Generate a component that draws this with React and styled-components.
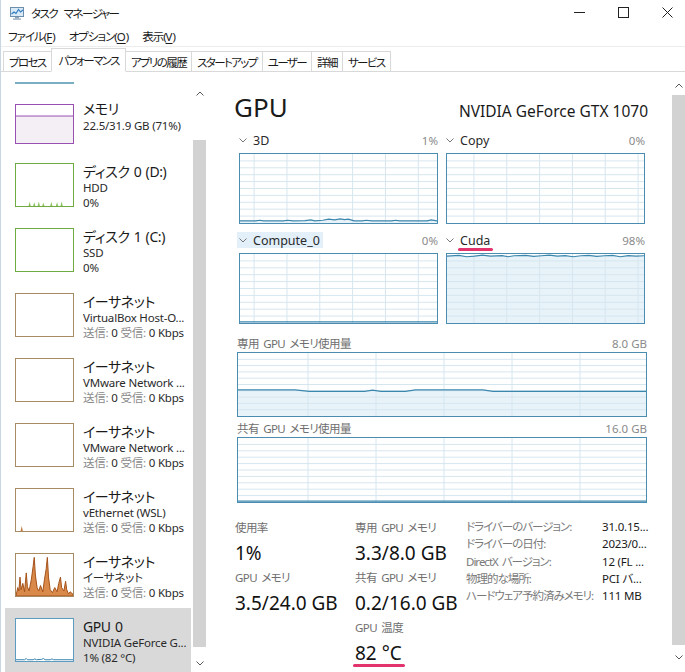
import React from "react";
import styled, { createGlobalStyle } from "styled-components";

const GlobalStyle = createGlobalStyle`
  html, body { margin: 0; padding: 0; background: #fff; }
  body {
    font-family: "Noto Sans", "Noto Sans CJK JP", sans-serif;
    font-feature-settings: "palt";
    color: #1a1a1a;
  }
`;

const Window = styled.div`
  width: 685px;
  height: 672px;
  overflow: hidden;
  display: flex;
  flex-direction: column;
  background: #fff;
  border-left: 1px solid #c9d7e3;
  box-sizing: border-box;
`;

const TitleBar = styled.div`
  height: 25px;
  flex: none;
  display: flex;
  align-items: center;
  padding-left: 8px;
  overflow: hidden;
`;

const AppTitle = styled.span`
  margin-left: 5px;
  font-size: 11.5px;
  letter-spacing: -1.5px;
  word-spacing: 5px;
`;

const WinControls = styled.div`
  margin-left: auto;
  margin-right: -4px;
  display: flex;
`;

const WinButton = styled.div`
  width: 44px;
  height: 25px;
  display: flex;
  align-items: center;
  justify-content: center;
`;

const MenuBar = styled.div`
  height: 21px;
  flex: none;
  display: flex;
  align-items: center;
  gap: 14px;
  padding-left: 7px;
  font-size: 11.5px;
  letter-spacing: -1px;

  u {
    text-underline-offset: 2px;
    letter-spacing: 0;
  }
`;

const TabBar = styled.div`
  height: 26px;
  flex: none;
  box-sizing: border-box;
  border-top: 1px solid #ededed;
  border-bottom: 1px solid #d9d9d9;
  display: flex;
  align-items: flex-end;
  padding-left: 3px;
`;

const Tab = styled.div`
  height: ${(p) => (p.$active ? 24 : 21)}px;
  margin-bottom: -1px;
  margin-left: -1px;
  box-sizing: border-box;
  padding: 0 ${(p) => (p.$active ? 6 : 5)}px 0 ${(p) => (p.$active ? 7 : 5)}px;
  display: flex;
  align-items: center;
  border: 1px solid #d9d9d9;
  border-bottom-color: ${(p) => (p.$active ? "#fff" : "#d9d9d9")};
  background: #fff;
  font-size: 11.5px;
  letter-spacing: -1.6px;
  position: relative;
  z-index: ${(p) => (p.$active ? 1 : 0)};
`;

const Body = styled.div`
  flex: 1;
  min-height: 0;
  display: flex;
`;

const Sidebar = styled.div`
  width: 205px;
  flex: none;
  display: flex;
`;

const SideList = styled.div`
  width: 192px;
  flex: none;
  display: flex;
  flex-direction: column;
  overflow: hidden;
`;

const CpuTail = styled.div`
  height: 12px;
  width: 59px;
  flex: none;
  margin: 0 0 4px 14px;
  box-sizing: border-box;
  border-bottom: 2px solid #7aaec2;
`;

const SideItem = styled.div`
  height: 65px;
  flex: none;
  display: flex;
  align-items: flex-start;
  margin: 0 2px 0 4px;
  padding-left: 10px;
  box-sizing: border-box;
  background: ${(p) => (p.$selected ? "#d9d9d9" : "transparent")};
`;

const Thumb = styled.div`
  width: 59px;
  height: ${(p) => p.$h}px;
  margin-top: ${(p) => p.$top}px;
  flex: none;
  box-sizing: border-box;
  border: 1px solid ${(p) => p.$color};
  background: #fff;
  overflow: hidden;

  svg {
    display: block;
    width: 100%;
    height: 100%;
  }
`;

const ItemText = styled.div`
  margin-left: 9px;
  padding-top: ${(p) => p.$top}px;
  min-width: 0;
  white-space: nowrap;
`;

const ItemTitle = styled.div`
  font-size: 14px;
  line-height: ${(p) => p.$lh || 18}px;
  letter-spacing: -0.4px;
  word-spacing: 1px;
`;

const ItemSub = styled.div`
  font-size: 11.5px;
  line-height: 14.5px;
  color: #2a2a2a;
  letter-spacing: -0.2px;
`;

const Dim = styled.span`
  color: #8a8a8a;
`;

const ScrollBar = styled.div`
  width: 13px;
  flex: none;
  display: flex;
  flex-direction: column;
  align-items: stretch;
  background: #fff;
`;

const ScrollArrow = styled.div`
  height: 18px;
  flex: none;
  margin-top: ${(p) => p.$mt || 0}px;
  margin-bottom: ${(p) => p.$mb || 0}px;
  display: flex;
  align-items: center;
  justify-content: center;
`;

const ScrollThumb = styled.div`
  flex: 1;
  margin: ${(p) => p.$m};
  background: #d2d2d2;
`;

const Main = styled.div`
  flex: 1;
  min-width: 0;
  display: flex;
`;

const Content = styled.div`
  flex: 1;
  min-width: 0;
  padding: 18px 25px 0 31px;
  display: flex;
  flex-direction: column;
`;

const Header = styled.div`
  height: 34px;
  display: flex;
  align-items: baseline;
  justify-content: space-between;
`;

const Heading = styled.div`
  font-size: 26px;
  line-height: 34px;
  margin-left: -3px;
`;

const Model = styled.div`
  font-size: 15.5px;
  margin-right: -1px;
`;

const SmallGrid = styled.div`
  margin-top: 8px;
  display: grid;
  grid-template-columns: 1fr 1fr;
  column-gap: 8px;
  row-gap: 8px;
  padding: 0 2px;
`;

const GraphCell = styled.div`
  display: flex;
  flex-direction: column;
`;

const GraphHead = styled.div`
  height: 16px;
  margin-bottom: ${(p) => p.$gap}px;
  display: flex;
  align-items: center;
  justify-content: space-between;
  font-size: 12px;
`;

const GraphName = styled.span`
  display: flex;
  align-items: center;
  gap: 6px;
  height: 16px;
  padding: 0 3px 0 2px;
  margin-left: -2px;
  color: #2a2a2a;
  font-size: 12.5px;
  background: ${(p) => (p.$hover ? "#e3f0fa" : "transparent")};
`;

const GraphValue = styled.span`
  color: #8a8a8a;
  font-size: 11.5px;
`;

const BigLabel = styled.span`
  color: #6f6f6f;
  font-size: 11.5px;
  letter-spacing: -0.6px;
  word-spacing: 2px;
`;

const Box = styled.div`
  height: ${(p) => p.$h}px;
  box-sizing: border-box;
  border: 1px solid #4b8db0;
  background: #fff;

  svg {
    display: block;
    width: 100%;
    height: 100%;
  }
`;

const BigSection = styled.div`
  margin-top: ${(p) => p.$mt}px;
  display: flex;
  flex-direction: column;
`;

const Stats = styled.div`
  margin-top: 14px;
  display: flex;
  align-items: flex-start;
  margin-left: -2px;
`;

const StatCol = styled.div`
  width: ${(p) => p.$w}px;
  flex: none;
  display: flex;
  flex-direction: column;
`;

const StatLabel = styled.div`
  font-size: 11.5px;
  line-height: 22px;
  color: #6f6f6f;
  letter-spacing: -0.6px;
  word-spacing: 2px;
`;

const StatValue = styled.div`
  font-size: 19px;
  line-height: 28px;
  color: #111;
  white-space: nowrap;
`;

const Props = styled.div`
  display: grid;
  grid-template-columns: 136px auto;
  align-content: start;
  padding-top: 1px;
  font-size: 11.5px;
  line-height: 17.3px;
  white-space: nowrap;
`;

const PropKey = styled.span`
  color: #7a7a7a;
  letter-spacing: -1px;
  word-spacing: 2px;
`;

const PropVal = styled.span`
  color: #1a1a1a;
  letter-spacing: -0.2px;
`;

const Mark = styled.span`
  position: relative;

  &::after {
    content: "";
    position: absolute;
    left: -2px;
    right: -3px;
    bottom: ${(p) => p.$b}px;
    height: 3px;
    border-radius: 2px;
    background: #e3336c;
  }
`;

/* ---------- drawings ---------- */

const AppIcon = () => (
  <svg width="17" height="16" viewBox="0 0 17 16">
    <rect x="1.5" y="2.5" width="13" height="9" fill="#d9eaf6" stroke="#6d8fae" />
    <polyline points="2.5,9 5,7 7,8.5 9.5,4.5 11.5,7 14,5" fill="none" stroke="#2f7cc0" strokeWidth="1.2" />
    <rect x="6" y="12" width="4" height="1.5" fill="#8aa2b8" />
    <rect x="4" y="13.5" width="8" height="1.2" fill="#8aa2b8" />
  </svg>
);

const Chevron = ({ up, color = "#777" }) => (
  <svg width="8" height="5" viewBox="0 0 8 5">
    <polyline
      points={up ? "0.5,4.5 4,1 7.5,4.5" : "0.5,0.5 4,4 7.5,0.5"}
      fill="none"
      stroke={color}
      strokeWidth="1"
    />
  </svg>
);

const Plot = ({ offset = 0, line, area, fill = "#e8f2f9" }) => {
  const rows = [10, 20, 30, 40, 50, 60, 70, 80, 90];
  const cols = [];
  for (let k = 0; k < 7; k++) {
    const x = ((offset + k) * 100) / 6;
    if (x > 1.5 && x < 98.5) cols.push(x);
  }
  return (
    <svg viewBox="0 0 100 100" preserveAspectRatio="none">
      {area && <path d={area} fill={fill} />}
      {rows.map((y) => (
        <line key={"r" + y} x1="0" x2="100" y1={y} y2={y} stroke="#d6e6ef" strokeWidth="1" vectorEffect="non-scaling-stroke" />
      ))}
      {cols.map((x) => (
        <line key={"c" + x} x1={x} x2={x} y1="0" y2="100" stroke="#d6e6ef" strokeWidth="1" vectorEffect="non-scaling-stroke" />
      ))}
      {line && <path d={line} fill="none" stroke="#3b86ad" strokeWidth="1.2" vectorEffect="non-scaling-stroke" />}
    </svg>
  );
};

const Mini = ({ area, line, fill, stroke }) => (
  <svg viewBox="0 0 100 100" preserveAspectRatio="none">
    {area && <path d={area} fill={fill} />}
    {line && <path d={line} fill="none" stroke={stroke} strokeWidth="1" vectorEffect="non-scaling-stroke" />}
  </svg>
);

/* ---------- data ---------- */

const line3d =
  "M0,97 L8,97 L10,96 L12,97 L22,97 L24,96 L27,97 L33,96.5 L36,95.5 L38,97 L42,96 L45,94.5 L48,95.5 L51,94 L53,95 L55,94.5 L58,97 L62,97 L64,96 L67,97 L77,97 L79,96 L81,97 L95,97 L97,95.5 L100,97";
const lineCuda =
  "M0,3 L6,2 L10,4 L14,3 L18,1.5 L22,3 L28,2.5 L31,4 L34,2.5 L40,2 L44,3.5 L48,2.5 L52,1.5 L56,3 L60,2.5 L64,4 L68,2.5 L72,2 L76,3.5 L80,2.5 L84,2 L88,4 L92,2.5 L96,3 L100,2.5";
const lineDedicated =
  "M0,58.5 L14,58.5 L17.5,61 L31,61 L33,59 L35,61 L41,61 L43.5,58.5 L60,58.5 L62.5,61 L100,61";
const linePlain = "M0,98.5 L100,98.5";

const toArea = (d) => d + " L100,100 L0,100 Z";

const diskSpikes =
  "M0,100 L22,100 L24,90 L26,100 L30,100 L32,91 L34,100 L38,100 L40,89 L42,100 L46,100 L48,92 L50,100 L60,100 L62,90 L64,100 L70,100 L72,91 L74,100 L78,100 L80,89 L82,100 L100,100 Z";
const ethSpikes =
  "M0,100 L3,80 L5,88 L7,55 L9,85 L12,70 L15,90 L18,45 L20,78 L23,88 L27,60 L30,30 L32,8 L34,50 L37,80 L40,88 L43,75 L47,90 L50,60 L53,35 L55,8 L57,55 L60,85 L64,92 L68,80 L72,90 L75,70 L78,55 L80,80 L84,88 L87,65 L89,85 L92,95 L95,90 L100,96 L100,100 Z";
const gpuMini =
  "M0,97 L15,97 L18,94 L20,97 L30,97 L33,95 L36,97 L45,96 L48,94 L51,97 L60,97 L63,95 L66,97 L100,97";

const sideItems = [
  {
    key: "disk0",
    color: "#6eab43",
    title: "ディスク 0 (D:)",
    sub: ["HDD", "0%"],
    plot: <Mini area={diskSpikes} fill="#8cc15f" />,
  },
  {
    key: "disk1",
    color: "#6eab43",
    title: "ディスク 1 (C:)",
    sub: ["SSD", "0%"],
  },
  { key: "e1", color: "#a88a63", title: "イーサネット", sub: ["VirtualBox Host-O...", null] },
  { key: "e2", color: "#a88a63", title: "イーサネット", sub: ["VMware Network ...", null] },
  { key: "e3", color: "#a88a63", title: "イーサネット", sub: ["VMware Network ...", null] },
  {
    key: "e4",
    color: "#a88a63",
    title: "イーサネット",
    sub: ["vEthernet (WSL)", null],
    plot: <Mini area="M0,100 L8,100 L10,88 L12,100 Z" fill="#c27a3a" />,
  },
  {
    key: "e5",
    color: "#a88a63",
    title: "イーサネット",
    sub: ["イーサネット", null],
    plot: <Mini area={ethSpikes} fill="#d98a4a" line={ethSpikes} stroke="#a5521a" />,
  },
];

const Traffic = () => (
  <>
    <Dim>送信: </Dim>0 <Dim>受信: </Dim>0 Kbps
  </>
);

export default function App() {
  return (
    <>
      <GlobalStyle />
      <Window>
        <TitleBar>
          <AppIcon />
          <AppTitle>タスク マネージャー</AppTitle>
          <WinControls>
            <WinButton>
              <svg width="11" height="11" viewBox="0 0 11 11">
                <line x1="0" y1="5.5" x2="11" y2="5.5" stroke="#222" strokeWidth="1" />
              </svg>
            </WinButton>
            <WinButton>
              <svg width="11" height="11" viewBox="0 0 11 11">
                <rect x="0.5" y="0.5" width="10" height="10" fill="none" stroke="#222" strokeWidth="1" />
              </svg>
            </WinButton>
            <WinButton>
              <svg width="11" height="11" viewBox="0 0 11 11">
                <path d="M0.5,0.5 L10.5,10.5 M10.5,0.5 L0.5,10.5" stroke="#222" strokeWidth="1" />
              </svg>
            </WinButton>
          </WinControls>
        </TitleBar>

        <MenuBar>
          <span>
            ファイル(<u>F</u>)
          </span>
          <span>
            オプション(<u>O</u>)
          </span>
          <span>
            表示(<u>V</u>)
          </span>
        </MenuBar>

        <TabBar>
          <Tab>プロセス</Tab>
          <Tab $active>パフォーマンス</Tab>
          <Tab>アプリの履歴</Tab>
          <Tab>スタートアップ</Tab>
          <Tab>ユーザー</Tab>
          <Tab>詳細</Tab>
          <Tab>サービス</Tab>
        </TabBar>

        <Body>
          <Sidebar>
            <SideList>
              <CpuTail />
              <SideItem>
                <Thumb $h={40} $top={16} $color="#9a4fb2">
                  <Mini
                    area="M0,29 L100,29 L100,100 L0,100 Z"
                    fill="#f3eff5"
                    line="M0,29 L100,29"
                    stroke="#9a4fb2"
                  />
                </Thumb>
                <ItemText $top={11}>
                  <ItemTitle $lh={20}>メモリ</ItemTitle>
                  <ItemSub>22.5/31.9 GB (71%)</ItemSub>
                </ItemText>
              </SideItem>

              {sideItems.map((it) => (
                <SideItem key={it.key}>
                  <Thumb $h={44} $top={10} $color={it.color}>
                    {it.plot}
                  </Thumb>
                  <ItemText $top={10}>
                    <ItemTitle>{it.title}</ItemTitle>
                    <ItemSub>{it.sub[0]}</ItemSub>
                    <ItemSub>{it.sub[1] ?? <Traffic />}</ItemSub>
                  </ItemText>
                </SideItem>
              ))}

              <SideItem $selected>
                <Thumb $h={44} $top={10} $color="#5b9cc0">
                  <Mini line={gpuMini} stroke="#3b86ad" />
                </Thumb>
                <ItemText $top={10}>
                  <ItemTitle>GPU 0</ItemTitle>
                  <ItemSub>NVIDIA GeForce G...</ItemSub>
                  <ItemSub>1% (82 °C)</ItemSub>
                </ItemText>
              </SideItem>
            </SideList>

            <ScrollBar>
              <ScrollArrow $mt={12}>
                <Chevron up color="#555" />
              </ScrollArrow>
              <ScrollThumb $m="38px 0 7px 0" />
              <ScrollArrow $mb={0}>
                <Chevron color="#555" />
              </ScrollArrow>
            </ScrollBar>
          </Sidebar>

          <Main>
            <Content>
              <Header>
                <Heading>GPU</Heading>
                <Model>NVIDIA GeForce GTX 1070</Model>
              </Header>

              <SmallGrid>
                <GraphCell>
                  <GraphHead $gap={5}>
                    <GraphName>
                      <Chevron />
                      3D
                    </GraphName>
                    <GraphValue>1%</GraphValue>
                  </GraphHead>
                  <Box $h={71}>
                    <Plot offset={0.43} line={line3d} area={toArea(line3d)} />
                  </Box>
                </GraphCell>
                <GraphCell>
                  <GraphHead $gap={5}>
                    <GraphName>
                      <Chevron />
                      Copy
                    </GraphName>
                    <GraphValue>0%</GraphValue>
                  </GraphHead>
                  <Box $h={71}>
                    <Plot offset={0.82} />
                  </Box>
                </GraphCell>
                <GraphCell>
                  <GraphHead $gap={5}>
                    <GraphName $hover>
                      <Chevron />
                      Compute_0
                    </GraphName>
                    <GraphValue>0%</GraphValue>
                  </GraphHead>
                  <Box $h={71}>
                    <Plot offset={0.43} line={linePlain} />
                  </Box>
                </GraphCell>
                <GraphCell>
                  <GraphHead $gap={5}>
                    <GraphName>
                      <Chevron />
                      <Mark $b={-2}>Cuda</Mark>
                    </GraphName>
                    <GraphValue>98%</GraphValue>
                  </GraphHead>
                  <Box $h={71}>
                    <Plot offset={0.82} line={lineCuda} area={toArea(lineCuda)} />
                  </Box>
                </GraphCell>
              </SmallGrid>

              <BigSection $mt={11}>
                <GraphHead $gap={1}>
                  <BigLabel>専用 GPU メモリ使用量</BigLabel>
                  <GraphValue>8.0 GB</GraphValue>
                </GraphHead>
                <Box $h={65}>
                  <Plot offset={0.03} line={lineDedicated} area={toArea(lineDedicated)} />
                </Box>
              </BigSection>

              <BigSection $mt={3}>
                <GraphHead $gap={1}>
                  <BigLabel>共有 GPU メモリ使用量</BigLabel>
                  <GraphValue>16.0 GB</GraphValue>
                </GraphHead>
                <Box $h={66}>
                  <Plot offset={0.03} line={linePlain} />
                </Box>
              </BigSection>

              <Stats>
                <StatCol $w={120}>
                  <StatLabel>使用率</StatLabel>
                  <StatValue>1%</StatValue>
                  <StatLabel>GPU メモリ</StatLabel>
                  <StatValue>3.5/24.0 GB</StatValue>
                </StatCol>
                <StatCol $w={111}>
                  <StatLabel>専用 GPU メモリ</StatLabel>
                  <StatValue>3.3/8.0 GB</StatValue>
                  <StatLabel>共有 GPU メモリ</StatLabel>
                  <StatValue>0.2/16.0 GB</StatValue>
                  <StatLabel>GPU 温度</StatLabel>
                  <StatValue>
                    <Mark $b={-1}>82 °C</Mark>
                  </StatValue>
                </StatCol>
                <Props>
                  <PropKey>ドライバーのバージョン:</PropKey>
                  <PropVal>31.0.15...</PropVal>
                  <PropKey>ドライバーの日付:</PropKey>
                  <PropVal>2023/0...</PropVal>
                  <PropKey>DirectX バージョン:</PropKey>
                  <PropVal>12 (FL ...</PropVal>
                  <PropKey>物理的な場所:</PropKey>
                  <PropVal>PCI バ...</PropVal>
                  <PropKey>ハードウェア予約済みメモリ:</PropKey>
                  <PropVal>111 MB</PropVal>
                </Props>
              </Stats>
            </Content>

            <ScrollBar>
              <ScrollArrow $mt={4}>
                <Chevron up color="#555" />
              </ScrollArrow>
              <ScrollThumb $m="1px 0 3px 0" />
              <ScrollArrow $mb={6}>
                <Chevron color="#555" />
              </ScrollArrow>
            </ScrollBar>
          </Main>
        </Body>
      </Window>
    </>
  );
}
